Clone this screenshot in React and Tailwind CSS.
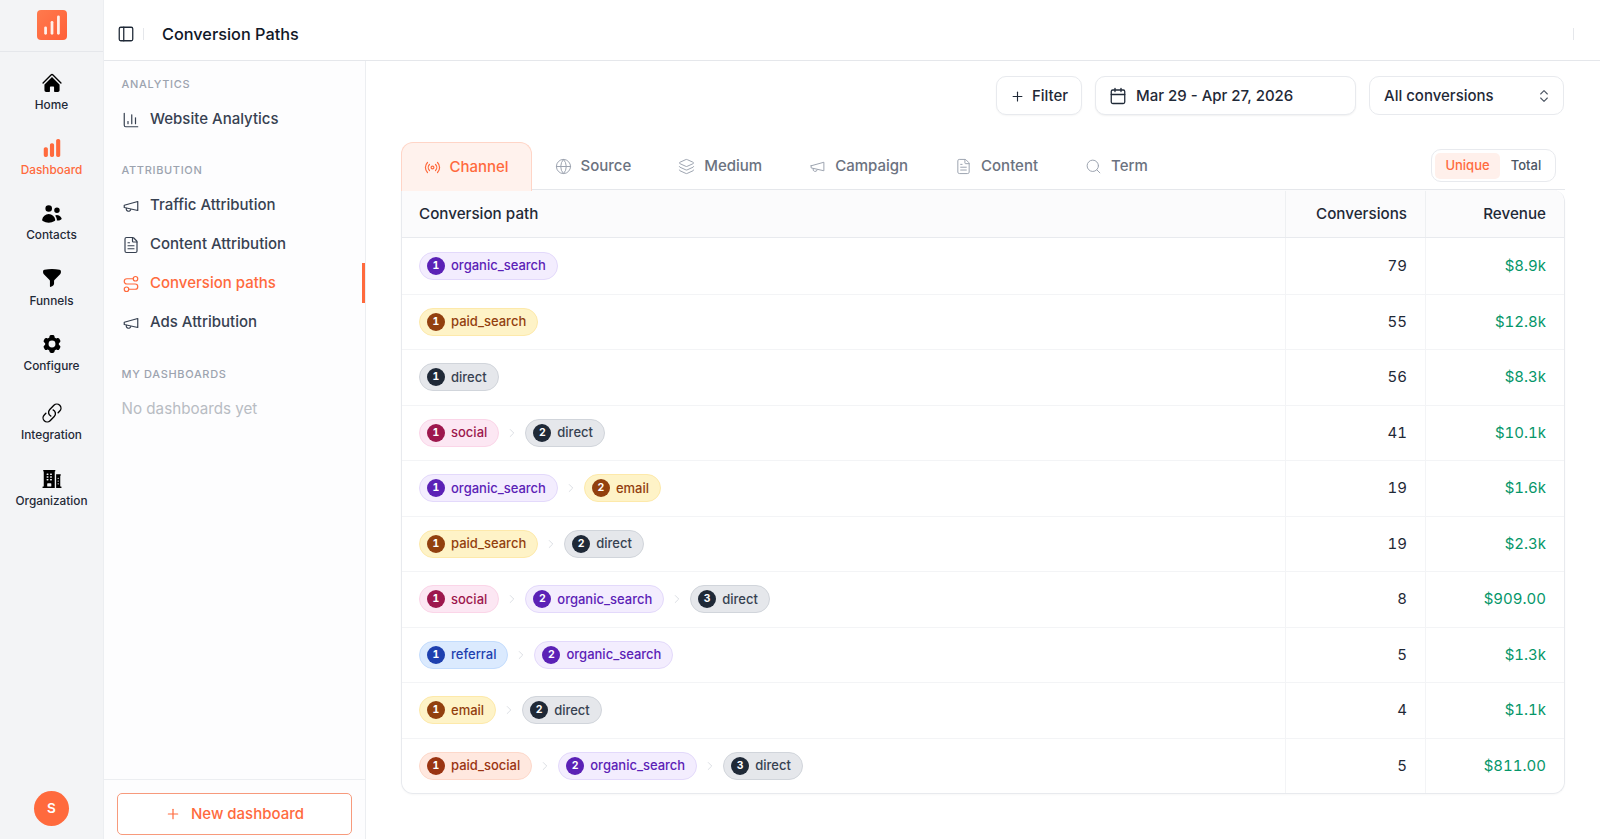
import React from "react";
import { ChartColumn, FileText, Route, Radio, Globe, Layers, Search, Plus, Calendar, ChevronsUpDown, PanelLeft, ChartNoAxesColumnIncreasing, ChevronRight } from "lucide-react";
import { HiHome, HiChartBar, HiMiniUsers, HiFunnel, HiCog6Tooth, HiOutlineLink, HiBuildingOffice2 } from "react-icons/hi2";

function Megaphone({ size = 17, strokeWidth = 1.6, className = "" }) {
  return (
    <svg width={size} height={size} viewBox="0 0 24 24" fill="none" stroke="currentColor" strokeWidth={strokeWidth} strokeLinecap="round" strokeLinejoin="round" className={className}>
      <path d="m3 11 18-5v12L3 14v-3z" />
      <path d="M11.6 16.8a3 3 0 1 1-5.8-1.6" />
    </svg>
  );
}

const rail = [
  { label: "Home", Icon: HiHome, h: "h-[64px]", lab: "mt-[1px]", top: "" },
  { label: "Dashboard", Icon: HiChartBar, active: true, h: "h-[65px]", top: "pt-[2px]" },
  { label: "Contacts", Icon: HiMiniUsers, h: "h-[66px]", top: "pt-[3px]" },
  { label: "Funnels", Icon: HiFunnel, h: "h-[65px]", top: "" },
  { label: "Configure", Icon: HiCog6Tooth, h: "h-[69px]", top: "pt-[2px]" },
  { label: "Integration", Icon: HiOutlineLink, h: "h-[66px]", top: "pt-[2px]" },
  { label: "Organization", Icon: HiBuildingOffice2, h: "h-[65px]", top: "pt-[2px]" },
];

const styles = {
  organic_search: ["bg-[#f3edfe] border-[#e3d9fb] text-[#5b21b6]", "bg-[#5b21b6]"],
  paid_search: ["bg-[#fef3c7] border-[#fde9aa] text-[#92400e]", "bg-[#92400e]"],
  email: ["bg-[#fef3c7] border-[#fde9aa] text-[#92400e]", "bg-[#92400e]"],
  direct: ["bg-[#e5e7eb] border-[#d1d5db] text-[#374151]", "bg-[#1f2937]"],
  social: ["bg-[#fce7f3] border-[#fbd5e8] text-[#9d174d]", "bg-[#9d174d]"],
  referral: ["bg-[#dbeafe] border-[#c3dcfd] text-[#1e40af]", "bg-[#1e40af]"],
  paid_social: ["bg-[#ffe8df] border-[#fdd8ca] text-[#9a3412]", "bg-[#9a3412]"],
};

const rows = [
  [["organic_search"], "79", "$8.9k"],
  [["paid_search"], "55", "$12.8k"],
  [["direct"], "56", "$8.3k"],
  [["social", "direct"], "41", "$10.1k"],
  [["organic_search", "email"], "19", "$1.6k"],
  [["paid_search", "direct"], "19", "$2.3k"],
  [["social", "organic_search", "direct"], "8", "$909.00"],
  [["referral", "organic_search"], "5", "$1.3k"],
  [["email", "direct"], "4", "$1.1k"],
  [["paid_social", "organic_search", "direct"], "5", "$811.00"],
];

function Pill({ name, n }) {
  const [c, b] = styles[name];
  return (
    <span className={`flex h-[28px] items-center gap-[6px] rounded-full border pl-[7px] pr-[11px] text-[13px] font-medium ${c}`}>
      <span className={`flex h-[18px] w-[18px] items-center justify-center rounded-full text-[10.5px] font-bold text-white ${b}`}>{n}</span>
      {name}
    </span>
  );
}

function Nav({ Icon, label, active }) {
  return (
    <div className={`flex h-[39px] items-center gap-[10px] pl-[18px] text-[15px] font-medium ${active ? "text-[#ff6a3d]" : "text-[#374151]"}`}>
      <Icon size={18} strokeWidth={1.6} className={active ? "text-[#ff6a3d]" : "text-[#374151]"} />
      {label}
    </div>
  );
}

function Section({ children, className }) {
  return <div className={`pl-[17.5px] text-[11px] font-medium tracking-[0.06em] text-[#9ca3af] ${className}`}>{children}</div>;
}

const tabs = [
  ["Source", Globe],
  ["Medium", Layers],
  ["Campaign", Megaphone],
  ["Content", FileText],
  ["Term", Search],
];

export default function App() {
  return (
    <div className="flex h-[839px] w-[1600px] overflow-hidden bg-white font-['Inter',sans-serif] text-[#111827]">
      <aside className="flex w-[104px] shrink-0 flex-col items-stretch border-r border-[#eceef1] bg-[#f3f4f6]">
        <div className="flex h-[52px] shrink-0 items-start justify-center border-b border-[#e5e7eb] pt-[10px]">
          <div className="flex h-[30px] w-[30px] items-center justify-center rounded-[4px] bg-gradient-to-br from-[#ff7a4d] to-[#ff5f38]">
            <ChartNoAxesColumnIncreasing size={22} strokeWidth={3} className="text-[#fff0ea]" />
          </div>
        </div>
        <div className="flex flex-col pt-[19px]">
          {rail.map(({ label, Icon, active, h, lab, top }) => (
            <div key={label} className={`flex flex-col items-center ${h} ${active ? "text-[#ff6a3d]" : "text-black"}`}>
              <div className={`flex h-[24px] items-center justify-center ${top}`}>
                <Icon size={22} />
              </div>
              <div className={`${lab || "mt-[2px]"} text-[11.8px] font-medium leading-[18px] ${active ? "" : "text-[#1f2937]"}`}>{label}</div>
            </div>
          ))}
        </div>
        <div className="mb-[13px] mt-auto flex justify-center">
          <div className="flex h-[35px] w-[35px] items-center justify-center rounded-full bg-[#ff6a3d] text-[13.5px] font-semibold text-white">S</div>
        </div>
      </aside>

      <div className="flex min-w-0 flex-1 flex-col">
        <header className="flex h-[61px] shrink-0 items-center border-b border-[#e5e7eb] pl-[13px] pr-[26px] pt-[8px]">
          <PanelLeft size={18} strokeWidth={1.7} className="text-[#1f2937]" />
          <span className="ml-[8px] h-[12px] w-px bg-[#e5e7eb]" />
          <h1 className="ml-[18px] text-[16.3px] font-medium">Conversion Paths</h1>
          <span className="ml-auto h-[12px] w-px bg-[#e5e7eb]" />
        </header>

        <div className="flex min-h-0 flex-1">
          <nav className="flex w-[262px] shrink-0 flex-col border-r border-[#eceef1] bg-[#fdfdfe]">
            <Section className="mt-[16px] leading-[14px]">ANALYTICS</Section>
            <div className="mt-[9px]"><Nav Icon={ChartColumn} label="Website Analytics" /></div>
            <Section className="mt-[24px] leading-[14px]">ATTRIBUTION</Section>
            <div className="relative mt-[9px]">
              <Nav Icon={Megaphone} label="Traffic Attribution" />
              <Nav Icon={FileText} label="Content Attribution" />
              <Nav Icon={Route} label="Conversion paths" active />
              <Nav Icon={Megaphone} label="Ads Attribution" />
              <span className="absolute right-0 top-[77px] h-[40px] w-[3px] bg-[#ff6a3d]" />
            </div>
            <Section className="mt-[25px] leading-[14px]">MY DASHBOARDS</Section>
            <div className="mt-[17px] pl-[17.5px] text-[15.2px] text-[#b8bcc3]">No dashboards yet</div>
            <div className="mt-auto h-[60px] border-t border-[#eceef1] px-[13px] pt-[13px]">
              <button className="flex h-[42px] w-full items-center justify-center gap-[10px] rounded-[5px] border border-[#f79a7c] bg-white text-[15px] font-medium text-[#ff6a3d]">
                <Plus size={16} strokeWidth={1.8} />
                New dashboard
              </button>
            </div>
          </nav>

          <main className="min-w-0 flex-1 pl-[35px] pr-[35px] pt-[15px]">
            <div className="mr-px flex justify-end gap-[13px] text-[#1f2937]">
              <button className="flex h-[39px] w-[86px] items-center justify-center gap-[7px] rounded-[10px] border border-[#e8eaee] bg-white pt-px text-[15px] font-medium shadow-[0_1px_2px_rgba(0,0,0,0.04)]">
                <Plus size={15} strokeWidth={1.8} />Filter
              </button>
              <button className="flex h-[39px] w-[261px] items-center gap-[9px] rounded-[10px] border border-[#e8eaee] bg-white pl-[13px] pt-px text-[15px] font-medium shadow-[0_1px_2px_rgba(0,0,0,0.06)]">
                <Calendar size={18} strokeWidth={1.7} />Mar 29 - Apr 27, 2026
              </button>
              <button className="flex h-[39px] w-[195px] items-center justify-between rounded-[10px] border border-[#e8eaee] bg-white pl-[14px] pr-[11px] pt-px text-[15px] font-medium">
                All conversions
                <ChevronsUpDown size={16} strokeWidth={1.6} className="text-[#4b5563]" />
              </button>
            </div>

            <div className="mt-[28px] flex h-[47px] items-end justify-between border-b border-[#e5e7eb]">
              <div className="flex h-full">
                <div className="-mb-px -mt-px flex h-[49px] w-[131px] items-center justify-center gap-[8px] rounded-t-[12px] border border-b-0 border-[#ffd5c7] bg-[#fff2ed] text-[15px] font-medium text-[#ff6a3d]">
                  <Radio size={17} strokeWidth={1.7} />Channel
                </div>
                <div className="-ml-px flex">
                  {tabs.map(([t, I]) => (
                    <div key={t} className="flex h-[46px] items-center gap-[9px] px-[23.5px] pt-px text-[15px] font-medium text-[#6b7280]">
                      <I size={17} strokeWidth={1.4} className="text-[#9ca3af]" />{t}
                    </div>
                  ))}
                </div>
              </div>
              <div className="mb-[7px] mr-[9px] flex h-[33px] w-[125px] items-center rounded-[10px] border border-[#e8eaee] p-[3px] text-[13px] font-medium">
                <span className="flex h-[26px] w-[65px] items-center justify-center rounded-[5px] bg-[#fff0eb] text-[#ff6a3d]">Unique</span>
                <span className="flex-1 text-center text-[#4b5563]">Total</span>
              </div>
            </div>

            <div className="overflow-hidden rounded-b-[12px] rounded-tr-[12px] border border-t-0 border-[#e8eaee] text-[15px] tabular-nums shadow-[0_1px_2px_rgba(0,0,0,0.03)]">
              <div className="grid h-[48px] grid-cols-[883px_140px_1fr] border-b border-[#e8eaee] bg-[#fbfbfc] pt-px text-[15.2px] font-medium text-[#1f2937]">
                <div className="flex items-center pl-[17px]">Conversion path</div>
                <div className="flex items-center justify-end border-l border-[#eef0f2] pr-[18px]">Conversions</div>
                <div className="flex items-center justify-end border-l border-[#eef0f2] pr-[18px]">Revenue</div>
              </div>
              {rows.map(([path, conv, rev], i) => (
                <div key={i} className={`grid h-[55.5px] grid-cols-[883px_140px_1fr] ${i ? "border-t border-[#f3f4f6]" : ""}`}>
                  <div className="flex items-center gap-[4px] pl-[17px]">
                    {path.map((p, j) => (
                      <React.Fragment key={j}>
                        {j > 0 && <ChevronRight size={14} strokeWidth={1.3} className="mx-[2px] text-[#d1d5db]" />}
                        <Pill name={p} n={j + 1} />
                      </React.Fragment>
                    ))}
                  </div>
                  <div className="flex items-center justify-end border-l border-[#f3f4f6] pr-[18px] text-[#1f2937]">{conv}</div>
                  <div className="flex items-center justify-end border-l border-[#f3f4f6] pr-[18px] text-[#059669]">{rev}</div>
                </div>
              ))}
            </div>
          </main>
        </div>
      </div>
    </div>
  );
}
